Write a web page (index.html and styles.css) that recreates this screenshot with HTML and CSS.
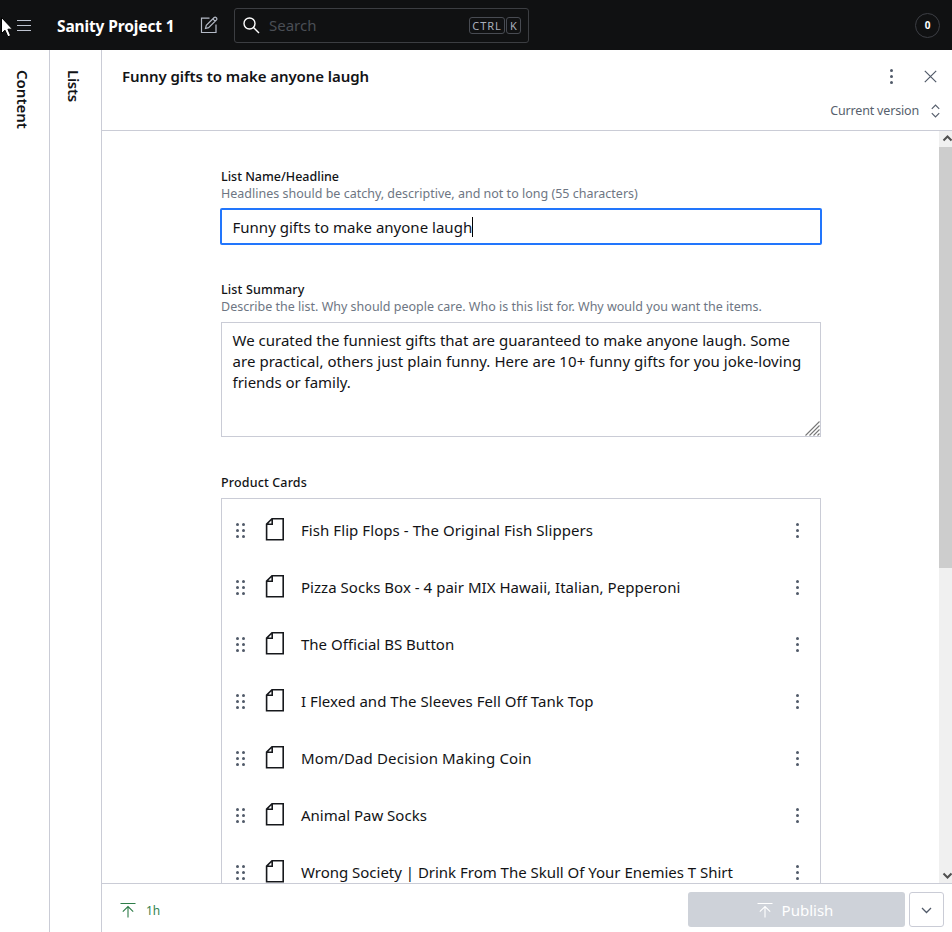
FILE: index.html
```
<!DOCTYPE html>
<html lang="en">
<head>
<meta charset="utf-8">
<title>Sanity Project 1</title>
<link rel="stylesheet" href="styles.css">
</head>
<body>
<svg class="defs" width="0" height="0">
  <symbol id="dots" viewBox="0 0 25 25"><circle cx="12.5" cy="6.5" r="1.5"/><circle cx="12.5" cy="12.5" r="1.5"/><circle cx="12.5" cy="18.5" r="1.5"/></symbol>
  <symbol id="drag" viewBox="0 0 25 25"><circle cx="9.5" cy="6.5" r="1.5"/><circle cx="9.5" cy="12.5" r="1.5"/><circle cx="9.5" cy="18.5" r="1.5"/><circle cx="15.5" cy="6.5" r="1.5"/><circle cx="15.5" cy="12.5" r="1.5"/><circle cx="15.5" cy="18.5" r="1.5"/></symbol>
  <symbol id="doc" viewBox="0 0 20 24"><path d="M7 1.8H18.2V22.7H1.6V7.2Z M7.2 1.8V7.2H1.6" fill="none" stroke="currentColor" stroke-width="1.6"/></symbol>
  <symbol id="publish" viewBox="0 0 16 16"><path d="M.5 1.5H15.5M8 15.5V4.5M2.8 9.7L8 4.5L13.2 9.7" fill="none" stroke="currentColor" stroke-width="1.1"/></symbol>
</svg>
<div class="app">
  <header class="navbar">
    <svg class="menu-icon" width="14" height="12" viewBox="0 0 14 12"><path d="M0 .5H14M0 5.5H14M0 10.5H14"/></svg>
    <strong class="project t-project">Sanity Project 1</strong>
    <svg class="compose" width="18" height="18" viewBox="0 0 18 18"><path d="M9.5 2.2H1.5V16.5H16V8.5M5.5 12.5L6.3 9.4L14.2 1.5Q15.2.7 16.3 1.7Q17.3 2.8 16.5 3.8L8.6 11.7ZM12.8 2.9L15.1 5.2"/></svg>
    <div class="search">
      <svg width="17" height="17" viewBox="0 0 17 17"><circle cx="6.5" cy="6.5" r="5.5"/><path d="M10.5 10.5L16 16"/></svg>
      <span class="t-search">Search</span>
      <kbd class="ctrl">CTRL</kbd><kbd class="key">K</kbd>
    </div>
    <div class="counter">0</div>
  </header>
  <div class="workspace">
    <div class="collapsed first"><span class="t-content">Content</span></div>
    <div class="collapsed second"><span class="t-lists">Lists</span></div>
    <main class="pane">
      <div class="pane-head">
        <div class="head-row">
          <h1 class="t-title">Funny gifts to make anyone laugh</h1>
          <svg class="more" width="25" height="25"><use href="#dots"/></svg>
          <svg class="close" width="13" height="13" viewBox="0 0 13 13"><path d="M.8.8L12.2 12.2M12.2.8L.8 12.2"/></svg>
        </div>
        <div class="version"><span class="t-version">Current version</span><svg width="9" height="14" viewBox="0 0 9 14"><path d="M.8 4.8L4.5 1L8.2 4.8M.8 9.2L4.5 13L8.2 9.2"/></svg></div>
      </div>
      <div class="pane-body">
        <div class="form">
          <section class="field">
            <div class="label"><span class="t-name">List Name/Headline</span></div>
            <div class="desc"><span class="t-desc1">Headlines should be catchy, descriptive, and not to long (55 characters)</span></div>
            <div class="input"><span class="t-input">Funny gifts to make anyone laugh</span><i class="caret"></i></div>
          </section>
          <section class="field summary">
            <div class="label"><span class="t-summary">List Summary</span></div>
            <div class="desc"><span class="t-desc2">Describe the list. Why should people care. Who is this list for. Why would you want the items.</span></div>
            <div class="textarea"><span class="t-line1">We curated the funniest gifts that are guaranteed to make anyone laugh. Some</span><br><span class="t-line2">are practical, others just plain funny. Here are 10+ funny gifts for you joke-loving</span><br><span class="t-line3">friends or family.</span>
              <svg class="grip" width="15" height="15" viewBox="0 0 15 15"><path d="M.5 14.5L14.5.5M4.5 14.5L14.5 4.5M8.5 14.5L14.5 8.5M12.5 14.5L14.5 12.5"/></svg>
            </div>
          </section>
          <section class="field products">
            <div class="label"><span class="t-products">Product Cards</span></div>
            <div class="cards">
              <div class="card"><svg class="drag"><use href="#drag"/></svg><svg class="doc"><use href="#doc"/></svg><span class="t-c1">Fish Flip Flops - The Original Fish Slippers</span><svg class="more"><use href="#dots"/></svg></div>
              <div class="card"><svg class="drag"><use href="#drag"/></svg><svg class="doc"><use href="#doc"/></svg><span class="t-c2">Pizza Socks Box - 4 pair MIX Hawaii, Italian, Pepperoni</span><svg class="more"><use href="#dots"/></svg></div>
              <div class="card"><svg class="drag"><use href="#drag"/></svg><svg class="doc"><use href="#doc"/></svg><span class="t-c3">The Official BS Button</span><svg class="more"><use href="#dots"/></svg></div>
              <div class="card"><svg class="drag"><use href="#drag"/></svg><svg class="doc"><use href="#doc"/></svg><span class="t-c4">I Flexed and The Sleeves Fell Off Tank Top</span><svg class="more"><use href="#dots"/></svg></div>
              <div class="card"><svg class="drag"><use href="#drag"/></svg><svg class="doc"><use href="#doc"/></svg><span class="t-c5">Mom/Dad Decision Making Coin</span><svg class="more"><use href="#dots"/></svg></div>
              <div class="card"><svg class="drag"><use href="#drag"/></svg><svg class="doc"><use href="#doc"/></svg><span class="t-c6">Animal Paw Socks</span><svg class="more"><use href="#dots"/></svg></div>
              <div class="card"><svg class="drag"><use href="#drag"/></svg><svg class="doc"><use href="#doc"/></svg><span class="t-c7">Wrong Society | Drink From The Skull Of Your Enemies T Shirt</span><svg class="more"><use href="#dots"/></svg></div>
            </div>
          </section>
        </div>
        <div class="scrollbar">
          <svg width="13" height="16" viewBox="0 0 13 16"><path d="M4.5 9.5L8.5 5.5L12.5 9.5"/></svg>
          <div class="thumb"></div>
          <svg class="down" width="13" height="17" viewBox="0 0 13 17"><path d="M4.5 7.5L8.5 11.5L12.5 7.5"/></svg>
        </div>
      </div>
      <footer class="pane-foot">
        <svg class="pub" width="16" height="16"><use href="#publish"/></svg>
        <span class="ago">1h</span>
        <div class="publish"><svg width="16" height="16"><use href="#publish"/></svg><span class="t-publish">Publish</span></div>
        <div class="menu"><svg width="11" height="7" viewBox="0 0 11 7"><path d="M1 1L5.5 5.5L10 1"/></svg></div>
      </footer>
    </main>
  </div>
  <svg class="cursor" width="13" height="23" viewBox="0 0 13 23"><path d="M1.5 1.5V17.5L5 14.2L7.9 20.8L10.6 19.6L7.9 13.2H12.5Z"/></svg>
</div>
</body>
</html>
```
FILE: styles.css
```
* { box-sizing: border-box; }
body { margin: 0; background: #fff; color: #121316; font-family: "Noto Sans", "Open Sans", sans-serif; font-size: 15px; }
svg { display: block; flex: none; }
.defs { position: absolute; }
.app { position: relative; width: 952px; height: 932px; overflow: hidden; display: flex; flex-direction: column; white-space: nowrap; }
.navbar { height: 50px; flex: none; background: #101112; color: #fff; display: flex; align-items: center; padding: 0 12px 0 17px; }
.menu-icon { stroke: #bdc3cf; fill: none; margin-top: 2px; }
.project { width: 118px; margin-left: 26px; font-size: 15.5px; font-weight: 700; letter-spacing: -.13px; padding-top: 1px; }
.compose { margin-left: 25px; margin-right: 1px; fill: none; stroke: #b4bac6; stroke-width: 1.2; }
.search { width: 295px; height: 35px; margin-left: 15px; border: 1px solid #3c3e42; border-radius: 3px; display: flex; align-items: center; padding: 0 7px 0 9px; color: #4a4e55; font-size: 15px; }
.search svg { fill: none; stroke: #fff; stroke-width: 1.4; margin: 0 9px 0 -1px; }
kbd { height: 17px; border: 1px solid #484b52; border-radius: 3px; color: #a9afbb; font: 11px/15px "Noto Sans", sans-serif; text-align: center; }
.ctrl { width: 36px; margin-left: auto; letter-spacing: .9px; }
.key { width: 15px; margin-left: 1px; }
.counter { width: 25px; height: 25px; margin-left: auto; border: 1.5px solid #3c3e44; border-radius: 50%; display: grid; place-items: center; font-size: 10px; font-weight: 700; }
.collapsed { border-right: 1px solid #caccd6; padding-top: 20px; writing-mode: vertical-rl; font-weight: 600; display: flex; align-items: center; }
.workspace { flex: 1; min-height: 0; display: flex; }
.first { width: 50px; padding-right: 3px; }
.second { width: 52px; padding-right: 3px; }
.t-lists { letter-spacing: -.3px; }
.pane { flex: 1; min-width: 0; display: flex; flex-direction: column; }
.pane-head { height: 81px; flex: none; border-bottom: 1px solid #caccd6; }
.head-row { height: 53px; display: flex; align-items: center; padding: 0 15px 0 20px; }
h1 { margin: 0 0 2px; font-size: 15px; font-weight: 600; letter-spacing: -.06px; }
.more, .drag { width: 25px; height: 25px; fill: #515a69; margin-left: auto; }
.close { margin-left: 20px; fill: none; stroke: #515a69; stroke-width: 1.2; }
.version { height: 16px; display: flex; justify-content: flex-end; align-items: center; padding-right: 12px; font-size: 12.5px; color: #575f6d; }
.t-version { letter-spacing: -.17px; margin-bottom: 2px; }
.version svg { margin-left: 12px; fill: none; stroke: #575f6d; stroke-width: 1.2; }
.pane-body { flex: 1; min-height: 0; display: flex; overflow: hidden; }
.form { width: 600px; margin: 37px 118px 0 119px; flex: none; }
.label { height: 17px; line-height: 18px; font-size: 12.5px; font-weight: 500; }
.t-summary, .t-products { letter-spacing: .15px; }
.desc { height: 17px; line-height: 17px; font-size: 12.5px; color: #6e7683; }
.input { width: 602px; height: 37px; margin: 6px -1px 0; border: 2px solid #2276fc; border-radius: 2px; display: flex; align-items: center; padding-left: 10.5px; }
.t-input { letter-spacing: .015px; }
.caret { width: 1px; height: 20px; background: #000; }
.summary { margin-top: 36px; }
.textarea { position: relative; height: 115px; margin-top: 7px; border: 1px solid #caccd6; padding: 7px 10.5px; line-height: 21px; }
.t-line2 { letter-spacing: .054px; }
.t-line3 { letter-spacing: -.03px; }
.grip { position: absolute; right: 0; bottom: 0; stroke: #777; stroke-width: 1.1; }
.products { margin-top: 37px; }
.cards { height: 500px; margin-top: 7px; border: 1px solid #caccd6; padding-top: 3px; }
.card { height: 57px; display: flex; align-items: center; padding: 0 10px 0 6px; }
.card span { margin-bottom: 2px; }
.t-c1 { letter-spacing: .07px; }
.t-c2 { letter-spacing: .03px; }
.t-c4 { letter-spacing: .04px; }
.t-c5 { letter-spacing: .15px; }
.t-c7 { letter-spacing: -.015px; }
.card .drag { margin: 0; }
.doc { width: 20px; height: 24px; margin: 0 16px 3px 12px; color: #16181c; }
.scrollbar { width: 13px; background: #f0f0f0; display: flex; flex-direction: column; }
.scrollbar svg { fill: none; stroke: #505050; stroke-width: 2; }
.thumb { height: 421px; background: #cdcdcd; }
.scrollbar .down { margin-top: auto; }
.pane-foot { height: 49px; flex: none; border-top: 1px solid #caccd6; display: flex; align-items: center; padding: 3px 8px 0 18px; }
.pub { color: #2e7d49; margin-top: 1px; }
.ago { margin: 1px 0 0 10px; font-size: 12px; color: #35834f; }
.publish { width: 217px; height: 35px; margin-left: auto; background: #ced2d9; border-radius: 3px; color: #fff; display: flex; align-items: center; justify-content: center; gap: 9px; padding-right: 3px; }
.menu { width: 35px; height: 35px; margin-left: 4px; border: 1px solid #caccd6; border-radius: 3px; display: grid; place-items: center; }
.menu svg { fill: none; stroke: #515a69; stroke-width: 1.3; margin-top: 2px; }
.cursor { position: absolute; left: 0; top: 16px; fill: #fff; stroke: #000; stroke-width: 1; }
```
